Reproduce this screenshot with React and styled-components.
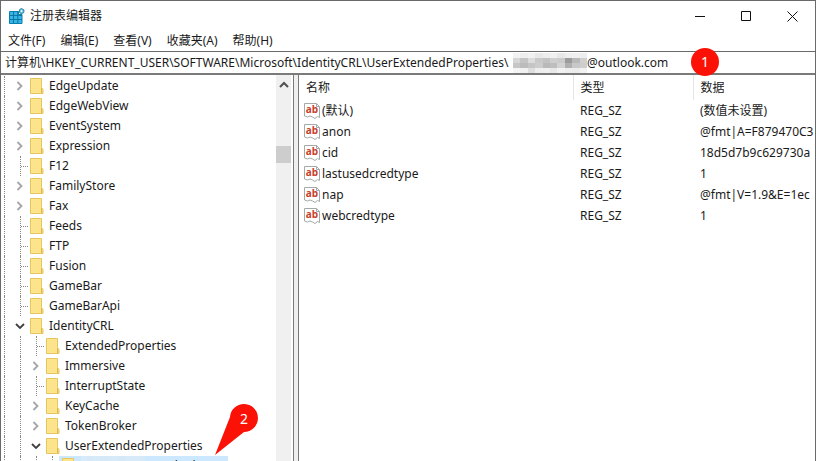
import React, { useState } from 'react';
import styled, { createGlobalStyle } from 'styled-components';

const GlobalStyle = createGlobalStyle`
  * { box-sizing: border-box; }
  body {
    margin: 0;
    background: #fff;
  }
  button, input {
    font: inherit;
    color: inherit;
    border: 0;
    padding: 0;
    margin: 0;
    background: none;
  }
`

/*Window*/
const Window = styled.div`
  display: flex;
  flex-direction: column;
  height: 100vh;
  overflow: hidden;
  border: 1px solid #6a6a6a;
  border-bottom: 0;
  background: #fff;
  color: #1a1a1a;
  font-family: "Noto Sans", "Noto Sans CJK SC", sans-serif;
  font-size: 12px;
  line-height: 20px;
`

const TitleBar = styled.header`
  display: flex;
  align-items: center;
  flex: none;
  height: 30px;
  padding-left: 8px;
  gap: 5px;
`

const Title = styled.h1`
  flex: 1;
  margin: 0;
  font-size: 12px;
  font-weight: 400;
`

const WindowButtons = styled.div`
  display: flex;
`

const WindowButton = styled.button`
  display: flex;
  align-items: center;
  justify-content: center;
  width: 46px;
  height: 30px;
`

const MenuBar = styled.nav`
  display: flex;
  flex: none;
  gap: 15px;
  height: 20px;
  padding-left: 7px;
`

const MenuButton = styled.button`
  line-height: 20px;
`

/*Address bar*/
const AddressBar = styled.div`
  display: flex;
  align-items: center;
  flex: none;
  height: 24px;
  padding-left: 4px;
  border-top: 1px solid #6a6a6a;
  border-bottom: 2px solid #7a7a7a;
`

const AddressInput = styled.input`
  flex: none;
  width: ${props => props.$width}px;
  height: 20px;
  outline: 0;
`

const Badge = styled.span`
  position: absolute;
  left: 691px;
  top: 48px;
  width: 28px;
  height: 28px;
  border-radius: 50%;
  background: #fb1106;
  color: #fff;
  font-size: 14px;
  line-height: 28px;
  text-align: center;
`

/*Panes*/
const Panes = styled.main`
  display: flex;
  flex: 1;
  min-height: 0;
  background: #f0f0f0;
`

const TreePane = styled.section`
  display: flex;
  flex: none;
  width: 293px;
  overflow: hidden;
  border-right: 1px solid #7a7a7a;
  background: #fff;
`

const Tree = styled.ul`
  flex: 1;
  margin: 0;
  padding: 1px 0 0 3px;
  list-style: none;
`

const TreeRow = styled.li`
  display: flex;
  align-items: center;
  height: 20px;
`

const Guide = styled.span`
  flex: none;
  width: 16px;
  height: 20px;
  border-left: 1px dotted #8a8a8a;
`

const Branch = styled.span`
  display: flex;
  align-items: center;
  flex: none;
  width: 10px;
  height: 20px;
  border-left: 1px dotted #8a8a8a;

  &::after {
    content: "";
    width: 7px;
    border-top: 1px dotted #8a8a8a;
  }
`

const Toggle = styled.button`
  display: flex;
  flex: none;
  align-items: center;
  justify-content: center;
  width: 10px;
  height: 10px;
  margin: 0 5px 0 -5px;
  background: #fff;
`

const NodeLabel = styled.span`
  display: flex;
  align-items: center;
  height: 20px;
  gap: 5px;
  margin-left: -3px;
  padding: 0 2px 0 3px;
  white-space: nowrap;
  background: ${props => props.$selected ? '#cce8ff' : 'none'};
`

const MaskedName = styled.span`
  display: flex;
  align-items: center;

  svg { opacity: 0.3; }
`

const ScrollBar = styled.div`
  display: flex;
  flex-direction: column;
  flex: none;
  width: 15px;
  margin-right: 2px;
  background: #f0f0f0;
`

const ScrollButton = styled.button`
  display: flex;
  align-items: center;
  justify-content: center;
  height: 20px;
`

const Thumb = styled.div`
  height: 17px;
  margin-top: 51px;
  background: #cdcdcd;
`

const ValuePane = styled.section`
  flex: 1;
  min-width: 0;
  margin-left: 4px;
  overflow: hidden;
  border-left: 1px solid #7a7a7a;
  background: #fff;
`

const ValueTable = styled.table`
  width: 100%;
  table-layout: fixed;
  border-collapse: collapse;
`

const HeadCell = styled.th`
  width: ${props => props.$width ? props.$width + 'px' : 'auto'};
  height: 25px;
  padding: 0 0 0 7px;
  border-right: 1px solid #e5e5e5;
  font-weight: 400;
  text-align: left;

  &:last-child { border-right: 0; }
`

const Cell = styled.td`
  height: 21px;
  padding: 0 0 0 7px;
  overflow: hidden;
  white-space: nowrap;
`

const ValueName = styled.span`
  display: flex;
  align-items: center;
  gap: 2px;
  margin-left: -2px;
`

const Pointer = styled.svg`
  position: absolute;
  left: 212px;
  top: 402px;
`

/*Icons*/
const RegistryIcon = () => (
  <svg width="16" height="16" viewBox="0 0 16 16" aria-hidden="true">
    <path d="M0.5 3.500h9v3h3.500v9h-12.500z" fill="#35b4e6" stroke="#0b7fb0" />
    <path d="M1 7.500h12M1 11.500h12M4.500 3.500v12M8.800 3.500v12" stroke="#0d76a3" fill="none" />
    <path d="M12.500 0.500l2.500 1.500-0.300 2.700-2.500 1-2-1.600 0.400-2.500z" fill="#68c7e8" stroke="#287f9e" />
    <circle cx="12.600" cy="3.100" r="0.900" fill="#fff" />
  </svg>
)

const FolderIcon = () => (
  <svg width="14" height="16" viewBox="0 0 14 16" aria-hidden="true">
    <path d="M0.500 0.500h11v9l1.500 2v4h-12.500z" fill="#ffe58f" stroke="#e6c55c" />
    <path d="M11.500 10v5" stroke="#dcb544" />
    <path d="M1.500 1.500h9v13h-9z" fill="#fde48c" />
  </svg>
)

const StringIcon = () => (
  <svg width="16" height="16" viewBox="0 0 16 16" overflow="visible" aria-hidden="true">
    <path d="M0.500 0.500h12l3 3v11l-2-1-2.500 2-2.500-1.500-2.500-1-2.500 1-3-1z" fill="#fff" stroke="#a3aaa8" />
    <path d="M12.500 0.500v3h3" fill="none" stroke="#a3aaa8" />
    <text x="8" y="10" textAnchor="middle" fontFamily="Open Sans, sans-serif" fontWeight="700" fontSize="10" fill="#c8402a">ab</text>
  </svg>
)

const Chevron = ({ open }) => (
  <svg width="10" height="10" viewBox="0 0 10 10" fill="none" strokeWidth="1.800" aria-hidden="true">
    {open
      ? <path d="M1 3l4 4 4-4" stroke="#404040" />
      : <path d="M2.500 1l4 4-4 4" stroke="#a6a6a6" />}
  </svg>
)

const mosaic = [
  ['#f3f3f3', '#eeeeee', '#f1f1f1', '#e8e8e8', '#ededed', '#f1f1f1', '#e8e8e8', '#efefef', '#f0f0f0', '#eeeeee'],
  ['#d6d6d6', '#c4c4c4', '#dcdcdc', '#c9c9c9', '#c2c2c2', '#cfcfcf', '#cbcbcb', '#9b9b9b', '#b8b8b8', '#d0d0d0'],
  ['#c6c6c6', '#bcbcbc', '#c5c5c5', '#cccccc', '#b9b9b9', '#bebebe', '#d3d3d3', '#b0b0b0', '#c8c8c8', '#cecece'],
  ['#f4f4f4', '#f1f1f1', '#dedede', '#eeeeee', '#efefef', '#e8e8e8', '#f2f2f2', '#eeeeee', '#ececec', '#f2f2f2'],
]

const Mosaic = ({ width }) => (
  <svg width={width} height="20" viewBox="0 0 60 20" preserveAspectRatio="none" shapeRendering="crispEdges" aria-hidden="true">
    {mosaic.map((line, y) => line.map((fill, x) => (
      <rect key={x + '-' + y} x={x * 6} y={y * 5} width="6" height="5" fill={fill} />
    )))}
  </svg>
)

/*Data*/
const keys = [
  { name: 'EdgeUpdate', children: true },
  { name: 'EdgeWebView', children: true },
  { name: 'EventSystem', children: true },
  { name: 'Expression', children: true },
  { name: 'F12' },
  { name: 'FamilyStore', children: true },
  { name: 'Fax', children: true },
  { name: 'Feeds' },
  { name: 'FTP' },
  { name: 'Fusion' },
  { name: 'GameBar' },
  { name: 'GameBarApi' },
  { name: 'IdentityCRL', children: true, open: true },
  { name: 'ExtendedProperties', level: 1 },
  { name: 'Immersive', level: 1, children: true },
  { name: 'InterruptState', level: 1 },
  { name: 'KeyCache', level: 1, children: true },
  { name: 'TokenBroker', level: 1, children: true },
  { name: 'UserExtendedProperties', level: 1, children: true, open: true },
  { name: '@outlook.com', level: 2, masked: true, selected: true },
]

const values = [
  ['(默认)', '(数值未设置)'],
  ['anon', '@fmt|A=F879470C3'],
  ['cid', '18d5d7b9c629730a'],
  ['lastusedcredtype', '1'],
  ['nap', '@fmt|V=1.9&E=1ec'],
  ['webcredtype', '1'],
]

const menus = ['文件(F)', '编辑(E)', '查看(V)', '收藏夹(A)', '帮助(H)']

const TreeItem = ({ item }) => {
  const level = item.level || 0
  return (
    <TreeRow role="treeitem" aria-level={level + 1} aria-selected={!!item.selected}>
      {Array.from({ length: level + 1 }, (_, i) => <Guide key={i} />)}
      {item.children
        ? <Toggle aria-label={item.name}><Chevron open={item.open} /></Toggle>
        : <Branch />}
      <NodeLabel $selected={item.selected}>
        <FolderIcon />
        {item.masked
          ? <MaskedName><Mosaic width={64} />{item.name}</MaskedName>
          : <span>{item.name}</span>}
      </NodeLabel>
    </TreeRow>
  )
}

const App = () => {
  // State
  const [path, setPath] = useState('计算机\\HKEY_CURRENT_USER\\SOFTWARE\\Microsoft\\IdentityCRL\\UserExtendedProperties\\')
  const [account, setAccount] = useState('@outlook.com')

  return (
    <Window>
      <GlobalStyle />
      <TitleBar>
        <RegistryIcon />
        <Title>注册表编辑器</Title>
        <WindowButtons>
          <WindowButton aria-label="最小化">
            <svg width="11" height="11"><path d="M0 5.500h10" stroke="#111" /></svg>
          </WindowButton>
          <WindowButton aria-label="最大化">
            <svg width="11" height="11"><path d="M0.500 0.500h9v9h-9z" fill="none" stroke="#111" /></svg>
          </WindowButton>
          <WindowButton aria-label="关闭">
            <svg width="11" height="11"><path d="M0.500 0.500l10 10M10.500 0.500l-10 10" stroke="#111" /></svg>
          </WindowButton>
        </WindowButtons>
      </TitleBar>
      <MenuBar>
        {menus.map(menu => <MenuButton key={menu}>{menu}</MenuButton>)}
      </MenuBar>
      <AddressBar>
        <AddressInput $width={508} aria-label="路径" value={path} onChange={(e) => setPath(e.target.value)} />
        <Mosaic width={74} />
        <AddressInput $width={90} aria-label="帐户" value={account} onChange={(e) => setAccount(e.target.value)} />
        <Badge>1</Badge>
      </AddressBar>
      <Panes>
        <TreePane>
          <Tree role="tree">
            {keys.map(item => <TreeItem key={item.name} item={item} />)}
          </Tree>
          <ScrollBar>
            <ScrollButton aria-label="向上滚动">
              <svg width="10" height="8" fill="none"><path d="M1 6l4-4 4 4" stroke="#505050" strokeWidth="2" /></svg>
            </ScrollButton>
            <Thumb />
          </ScrollBar>
        </TreePane>
        <ValuePane>
          <ValueTable>
            <thead>
              <tr>
                <HeadCell $width={274}>名称</HeadCell>
                <HeadCell $width={120}>类型</HeadCell>
                <HeadCell>数据</HeadCell>
              </tr>
            </thead>
            <tbody>
              {values.map(([name, data]) => (
                <tr key={name}>
                  <Cell><ValueName><StringIcon />{name}</ValueName></Cell>
                  <Cell>REG_SZ</Cell>
                  <Cell>{data}</Cell>
                </tr>
              ))}
            </tbody>
          </ValueTable>
        </ValuePane>
      </Panes>
      <Pointer width="50" height="56" viewBox="0 0 50 56" aria-hidden="true">
        <path d="M18 15a14 14 0 1 1 14 15L3 53z" fill="#fb1106" />
        <text x="32" y="22" textAnchor="middle" fontSize="14" fill="#fff">2</text>
      </Pointer>
    </Window>
  )
}

export default App
